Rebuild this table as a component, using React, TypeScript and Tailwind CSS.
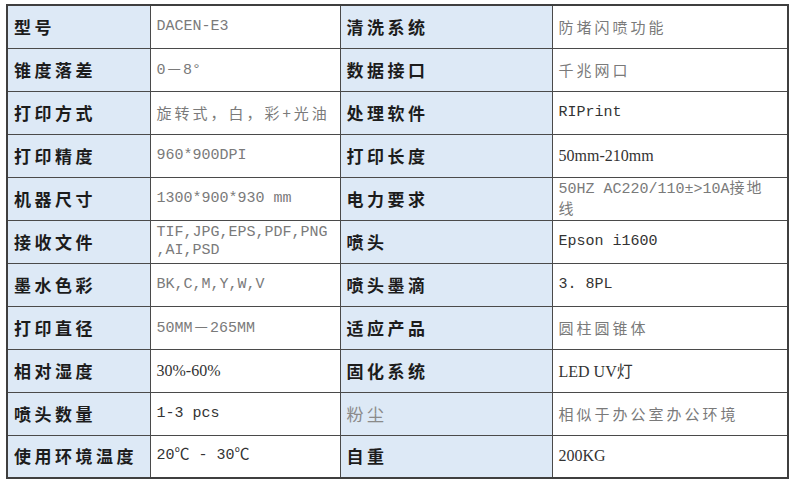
import type { ReactNode } from 'react';

// Spec sheet: four columns, label / value pairs, label cells tinted blue.
type Kind = 'cjk' | 'mono' | 'serif';

interface Value {
  text: ReactNode;
  kind: Kind;
  dark?: boolean;
  twoLine?: boolean;
}

interface Row {
  a: string;
  av: Value;
  b: string;
  bv: Value;
  bMuted?: boolean;
}

const Dash = () => <span className="px-[2px] font-['Noto_Sans_CJK_SC'] tracking-normal">—</span>;

const ROWS: Row[] = [
  { a: '型号', av: { text: 'DACEN-E3', kind: 'mono' }, b: '清洗系统', bv: { text: '防堵闪喷功能', kind: 'cjk' } },
  { a: '锥度落差', av: { text: <>0<Dash />8°</>, kind: 'mono' }, b: '数据接口', bv: { text: '千兆网口', kind: 'cjk' } },
  { a: '打印方式', av: { text: '旋转式，白，彩+光油', kind: 'cjk' }, b: '处理软件', bv: { text: 'RIPrint', kind: 'mono', dark: true } },
  { a: '打印精度', av: { text: '960*900DPI', kind: 'mono' }, b: '打印长度', bv: { text: '50mm-210mm', kind: 'serif', dark: true } },
  {
    a: '机器尺寸',
    av: { text: '1300*900*930 mm', kind: 'mono' },
    b: '电力要求',
    bv: {
      text: <>50HZ AC220/110±&gt;10A<span className="font-['Noto_Sans_CJK_SC'] tracking-[2px]">接地</span><br /><span className="font-['Noto_Sans_CJK_SC']">线</span></>,
      kind: 'mono',
      twoLine: true,
    },
  },
  {
    a: '接收文件',
    av: { text: <>TIF,JPG,EPS,PDF,PNG<br />,AI,PSD</>, kind: 'mono', twoLine: true },
    b: '喷头',
    bv: { text: 'Epson i1600', kind: 'mono', dark: true },
  },
  { a: '墨水色彩', av: { text: 'BK,C,M,Y,W,V', kind: 'mono' }, b: '喷头墨滴', bv: { text: '3. 8PL', kind: 'mono', dark: true } },
  { a: '打印直径', av: { text: <>50MM<Dash />265MM</>, kind: 'mono' }, b: '适应产品', bv: { text: '圆柱圆锥体', kind: 'cjk' } },
  { a: '相对湿度', av: { text: '30%-60%', kind: 'serif', dark: true }, b: '固化系统', bv: { text: <>LED UV<span className="font-['Noto_Sans_CJK_SC']">灯</span></>, kind: 'serif', dark: true } },
  { a: '喷头数量', av: { text: '1-3 pcs', kind: 'mono', dark: true }, b: '粉尘', bMuted: true, bv: { text: '相似于办公室办公环境', kind: 'cjk' } },
  { a: '使用环境温度', av: { text: '20℃ - 30℃', kind: 'mono', dark: true }, b: '自重', bv: { text: '200KG', kind: 'serif', dark: true } },
];

const KIND_CLASS: Record<Kind, string> = {
  cjk: "font-['Noto_Sans_CJK_SC',sans-serif] text-[15px] tracking-[3px]",
  mono: "font-['Liberation_Mono','Noto_Sans_CJK_SC',monospace] text-[15px]",
  serif: "font-['Liberation_Serif','Noto_Sans_CJK_SC',serif] text-[16px]",
};

function Label({ text, muted }: { text: string; muted?: boolean }) {
  return (
    <td
      className={`h-[43px] border border-[#4a4a4a] bg-[#dde9f6] pl-[6px] align-middle font-['Noto_Sans_CJK_SC',sans-serif] text-[17px] leading-[20px] tracking-[3.5px] ${
        muted ? 'font-normal text-[#8a8a8a]' : 'font-bold text-[#1c1c1c]'
      }`}
    >
      {text}
    </td>
  );
}

function Cell({ v }: { v: Value }) {
  return (
    <td
      className={`h-[43px] border border-[#4a4a4a] bg-white pl-[6px] align-middle ${v.twoLine ? 'leading-[18px]' : 'leading-[20px]'} ${KIND_CLASS[v.kind]} ${
        v.dark ? 'text-[#333333]' : 'text-[#7a7a7a]'
      }`}
    >
      {v.text}
    </td>
  );
}

export default function App() {
  return (
    <div className="min-h-screen w-[791px] bg-white pl-[6px] pt-[4px]">
      <table className="w-[781px] table-fixed border-collapse border-2 border-[#3f3f3f]">
        <colgroup>
          <col className="w-[143px]" />
          <col className="w-[190px]" />
          <col className="w-[212px]" />
          <col className="w-[236px]" />
        </colgroup>
        <tbody>
          {ROWS.map((r) => (
            <tr key={r.a}>
              <Label text={r.a} />
              <Cell v={r.av} />
              <Label text={r.b} muted={r.bMuted} />
              <Cell v={r.bv} />
            </tr>
          ))}
        </tbody>
      </table>
    </div>
  );
}
